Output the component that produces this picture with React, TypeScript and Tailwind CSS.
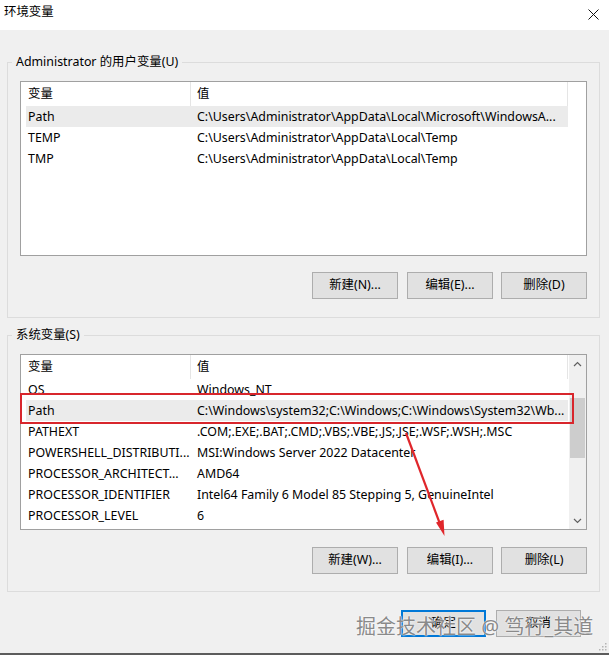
import React from 'react';

type Row = { name: string; value: string; selected?: boolean };

const userVars: Row[] = [
  { name: 'Path', value: 'C:\\Users\\Administrator\\AppData\\Local\\Microsoft\\WindowsA...', selected: true },
  { name: 'TEMP', value: 'C:\\Users\\Administrator\\AppData\\Local\\Temp' },
  { name: 'TMP', value: 'C:\\Users\\Administrator\\AppData\\Local\\Temp' },
];

const sysVars: Row[] = [
  { name: 'OS', value: 'Windows_NT' },
  { name: 'Path', value: 'C:\\Windows\\system32;C:\\Windows;C:\\Windows\\System32\\Wb...', selected: true },
  { name: 'PATHEXT', value: '.COM;.EXE;.BAT;.CMD;.VBS;.VBE;.JS;.JSE;.WSF;.WSH;.MSC' },
  { name: 'POWERSHELL_DISTRIBUTI...', value: 'MSI:Windows Server 2022 Datacenter' },
  { name: 'PROCESSOR_ARCHITECT...', value: 'AMD64' },
  { name: 'PROCESSOR_IDENTIFIER', value: 'Intel64 Family 6 Model 85 Stepping 5, GenuineIntel' },
  { name: 'PROCESSOR_LEVEL', value: '6' },
];

// Classic Win10 push button
const Btn = ({ label, primary, className = '' }: { label: string; primary?: boolean; className?: string }) => (
  <div
    className={`flex items-center justify-center h-[27px] text-[12.4px] text-black bg-[#e1e1e1] ${
      primary ? 'w-[85px] border-2 border-[#0078d7]' : 'w-[86px] border border-[#adadad]'
    } ${className}`}
  >
    {label}
  </div>
);

const ListView = ({ rows, scroll, height }: { rows: Row[]; scroll?: boolean; height: string }) => (
  <div className={`flex w-[567px] ${height} border border-[#a0a0a0] bg-white overflow-hidden`}>
    <div className="flex flex-col w-[548px] shrink-0">
      {/* header */}
      <div className="flex h-[24px] shrink-0 text-[12.4px] text-black">
        <div className="flex items-center w-[170px] pl-[7px] border-r border-[#e5e5e5]">变量</div>
        <div className="flex items-center w-[377px] pl-[6px] border-r border-[#e5e5e5]">值</div>
      </div>
      {rows.map((r) => (
        <div
          key={r.name}
          className={`flex h-[21px] shrink-0 ml-[5px] w-[542px] items-center pt-[2px] text-[12.4px] text-black whitespace-nowrap ${
            r.selected ? 'bg-[#ebebeb]' : ''
          }`}
        >
          <div className="w-[165px] pl-[2px] overflow-hidden">{r.name}</div>
          <div className="flex-1 pl-[6px] overflow-hidden">{r.value}</div>
        </div>
      ))}
    </div>
    {scroll && (
      <div className="flex flex-col w-[17px] ml-auto bg-[#f0f0f0]">
        <div className="flex items-center justify-center h-[17px]">
          <svg width="9" height="6" viewBox="0 0 9 6">
            <path d="M1 5 L4.5 1.5 L8 5" fill="none" stroke="#606060" strokeWidth="1.2" />
          </svg>
        </div>
        <div className="flex-1 flex flex-col px-[1px]">
          <div className="h-[26px]" />
          <div className="h-[60px] bg-[#cdcdcd]" />
        </div>
        <div className="flex items-center justify-center h-[17px]">
          <svg width="9" height="6" viewBox="0 0 9 6">
            <path d="M1 1 L4.5 4.5 L8 1" fill="none" stroke="#606060" strokeWidth="1.2" />
          </svg>
        </div>
      </div>
    )}
  </div>
);

const Group = ({
  label,
  children,
  className = '',
}: {
  label: string;
  children: React.ReactNode;
  className?: string;
}) => (
  <fieldset className={`w-[592px] border border-[#dcdcdc] px-[12px] ${className}`}>
    <legend className="-ml-2 px-1 text-[12.4px] leading-[16px] text-black">{label}</legend>
    {children}
  </fieldset>
);

export default function App() {
  return (
    <div className="relative w-[609px] h-[657px] bg-white overflow-hidden font-['Noto_Sans','Noto_Sans_CJK_SC',sans-serif]">
      <div className="flex flex-col h-[655px] bg-[#f0f0f0] border-b-2 border-[#5c5c5c]">
        {/* title bar */}
        <div className="flex items-center justify-between h-[30px] shrink-0 bg-white pl-[4px] pr-[10px] pb-[5px]">
          <span className="text-[12.4px] text-black">环境变量</span>
          <svg width="11" height="11" viewBox="0 0 11 11" className="mt-[3px]">
            <path d="M0.5 0.5 L10.5 10.5 M10.5 0.5 L0.5 10.5" stroke="#111" strokeWidth="1" />
          </svg>
        </div>

        <div className="flex flex-col pl-[7px]">
          <Group label="Administrator 的用户变量(U)" className="mt-[24px] pt-[11px] pb-[18px]">
            <ListView rows={userVars} height="h-[175px]" />
            <div className="flex justify-end gap-[8px] mt-[16px]">
              <Btn label="新建(N)..." className="mr-[1px]" />
              <Btn label="编辑(E)..." />
              <Btn label="删除(D)" />
            </div>
          </Group>

          <Group label="系统变量(S)" className="mt-[9px] pt-[11px] pb-[17px]">
            <ListView rows={sysVars} scroll height="h-[176px]" />
            <div className="flex justify-end gap-[8px] mt-[17px]">
              <Btn label="新建(W)..." className="mr-[1px]" />
              <Btn label="编辑(I)..." />
              <Btn label="删除(L)" />
            </div>
          </Group>
        </div>

        <div className="flex justify-end gap-[10px] mt-[18px] pr-[28px]">
          <Btn label="确定" primary />
          <Btn label="取消" primary={false} className="!w-[85px]" />
        </div>
      </div>

      {/* annotation: red box around Path */}
      <div className="absolute left-[20px] top-[393px] w-[554px] h-[31px] border-2 border-[#d8262c]" />

      {/* annotation: red arrow */}
      <svg className="absolute left-0 top-0" width="609" height="657" viewBox="0 0 609 657">
        <line x1="406" y1="433" x2="440" y2="524" stroke="#e0262b" strokeWidth="2.2" />
        <path d="M444.5 536 L436 522.5 L443.6 519.7 Z" fill="#e0262b" />
      </svg>

      {/* watermark */}
      <div className="absolute left-[356px] top-[613px] text-[20px] leading-[28px] text-[#8a8a8a] whitespace-nowrap [text-shadow:0_0_2px_#fff,0_0_1px_#fff]">
        掘金技术社区 @ 笃行_其道
      </div>

      {/* resize grip */}
      <svg className="absolute right-[2px] bottom-[6px]" width="8" height="8" viewBox="0 0 8 8">
        <rect x="6" y="0" width="1.5" height="1.5" fill="#b4b4b4" />
        <rect x="3" y="3" width="1.5" height="1.5" fill="#b4b4b4" />
        <rect x="6" y="3" width="1.5" height="1.5" fill="#b4b4b4" />
        <rect x="0" y="6" width="1.5" height="1.5" fill="#b4b4b4" />
        <rect x="3" y="6" width="1.5" height="1.5" fill="#b4b4b4" />
        <rect x="6" y="6" width="1.5" height="1.5" fill="#b4b4b4" />
      </svg>
    </div>
  );
}
